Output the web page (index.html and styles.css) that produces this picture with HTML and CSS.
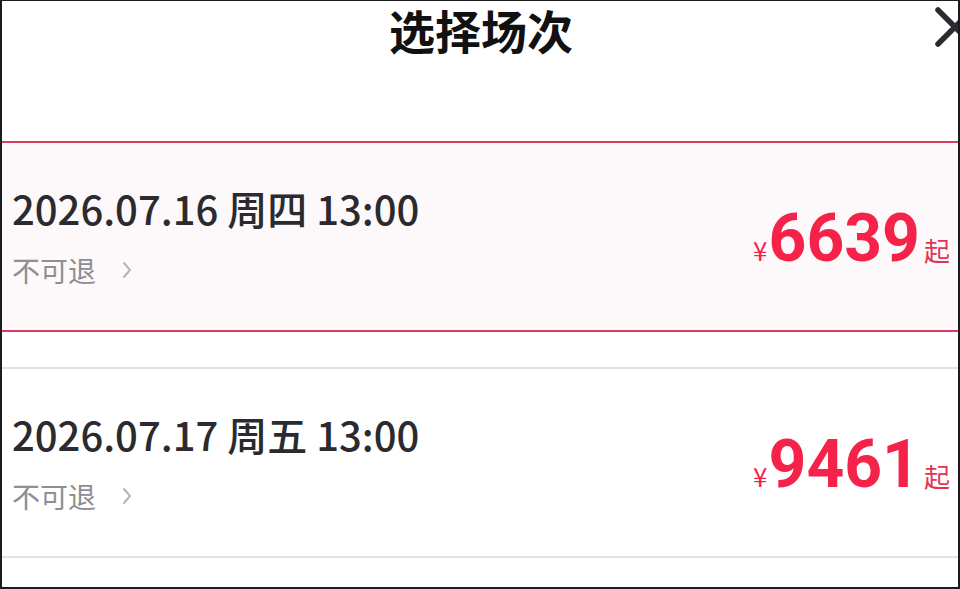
FILE: index.html
```html
<!DOCTYPE html>
<html>
<head>
  <meta charset="utf-8">
  <title>选择场次</title>
  <link rel="stylesheet" href="styles.css">
</head>
<body>
  <div class="screen">
    <header class="sheet-header">
      <h1 class="sheet-title">选择场次</h1>
      <button class="close-btn" aria-label="关闭">
        <svg width="40" height="40" viewBox="0 0 40 40">
          <path d="M3 3 L37 37 M37 3 L3 37" stroke="#2c2c30" stroke-width="5.5" stroke-linecap="round" fill="none"/>
        </svg>
      </button>
    </header>

    <ul class="session-list">
      <li class="session selected">
        <div class="session-info">
          <div class="session-time">2026.07.16 周四 13:00</div>
          <div class="session-rule">不可退
            <svg class="chevron" width="10" height="18" viewBox="0 0 10 18">
              <path d="M2 2 L8 9 L2 16" stroke="#b4b4b9" stroke-width="2" fill="none" stroke-linecap="round" stroke-linejoin="round"/>
            </svg>
          </div>
        </div>
        <div class="session-price">
          <span class="yen">¥</span><span class="amount">6639</span><span class="from">起</span>
        </div>
      </li>
      <li class="session">
        <div class="session-info">
          <div class="session-time">2026.07.17 周五 13:00</div>
          <div class="session-rule">不可退
            <svg class="chevron" width="10" height="18" viewBox="0 0 10 18">
              <path d="M2 2 L8 9 L2 16" stroke="#b4b4b9" stroke-width="2" fill="none" stroke-linecap="round" stroke-linejoin="round"/>
            </svg>
          </div>
        </div>
        <div class="session-price">
          <span class="yen">¥</span><span class="amount">9461</span><span class="from">起</span>
        </div>
      </li>
    </ul>
  </div>
</body>
</html>
```

FILE: styles.css
```css
html {
  background: #1c1c1e;
}
body {
  margin: 0;
  font-family: "Noto Sans CJK SC", "Noto Sans", sans-serif;
}
.screen {
  width: 956px;
  height: 586px;
  margin: 1px 2px 2px 2px;
  background: #fff;
  overflow: hidden;
}

/* header */
.sheet-header {
  position: relative;
  height: 140px;
  display: flex;
  justify-content: center;
}
.sheet-title {
  margin: 0;
  padding-left: 2px;
  font-size: 46px;
  font-weight: 700;
  line-height: 56px;
  color: #111;
}
.close-btn {
  position: absolute;
  top: 6px;
  right: -17px;
  padding: 0;
  border: none;
  background: none;
  line-height: 0;
}

/* session rows */
.session-list {
  list-style: none;
  margin: 0;
  padding: 0;
  display: flex;
  flex-direction: column;
  gap: 35px;
}
.session {
  height: 191px;
  box-sizing: border-box;
  border-top: 2px solid #e2e2e4;
  border-bottom: 2px solid #e2e2e4;
  display: flex;
  align-items: center;
  justify-content: space-between;
  padding: 0 8px 0 10px;
}
.session.selected {
  border-color: #d83c5e;
  background: #fdf8fa;
}
.session-info {
  display: flex;
  flex-direction: column;
  gap: 22px;
  padding-top: 1px;
}
.session-time {
  font-size: 40px;
  font-weight: 500;
  line-height: 44px;
  color: #2a2a2f;
}
.session-rule {
  display: flex;
  align-items: center;
  font-size: 28px;
  line-height: 36px;
  color: #8e8e93;
}
.chevron {
  margin-left: 26px;
}

.session-price {
  display: flex;
  align-items: baseline;
  color: #f5234a;
  padding-top: 4px;
}
.yen {
  font-size: 26px;
  margin-right: 1px;
}
.amount {
  font-family: Roboto, "Noto Sans", sans-serif;
  font-size: 66px;
  font-weight: 700;
  line-height: 70px;
}
.from {
  font-size: 26px;
  color: #e03553;
  margin-left: 4px;
}
```
